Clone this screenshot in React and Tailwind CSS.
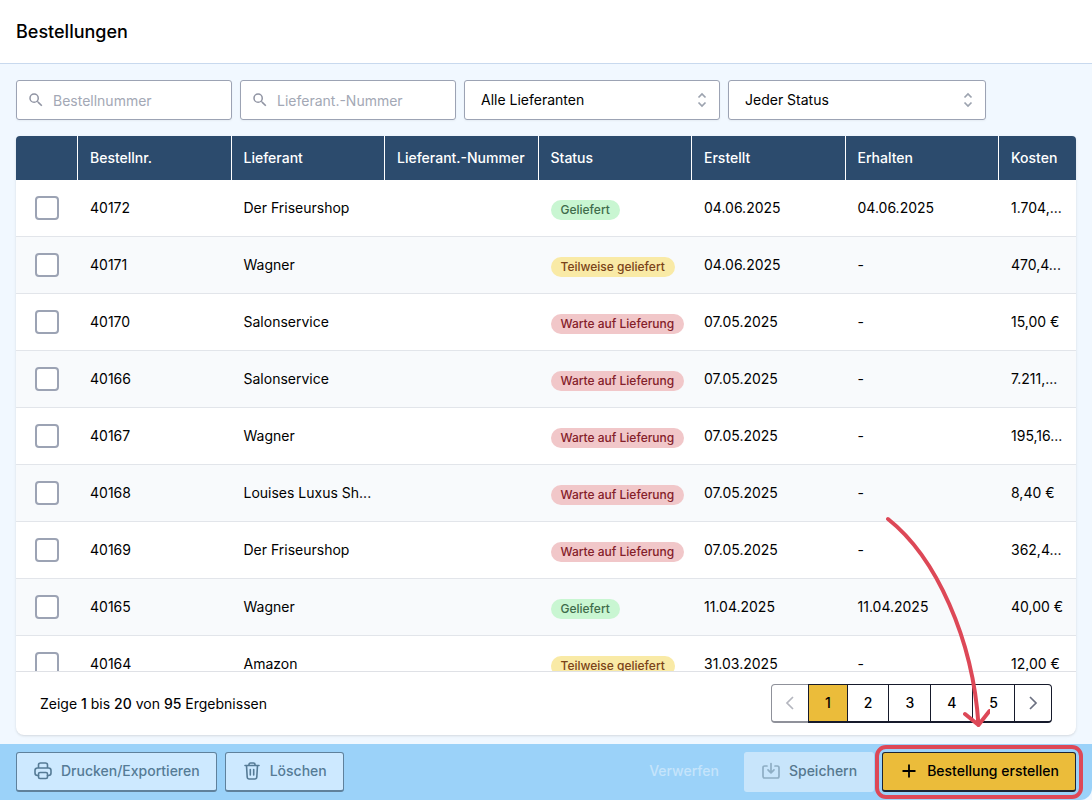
import React, { useState } from 'react';

const ORDERS = [
  { nr: '40172', supplier: 'Der Friseurshop', status: 'delivered', created: '04.06.2025', received: '04.06.2025', cost: '1.704,...' },
  { nr: '40171', supplier: 'Wagner', status: 'partial', created: '04.06.2025', received: '-', cost: '470,4...' },
  { nr: '40170', supplier: 'Salonservice', status: 'waiting', created: '07.05.2025', received: '-', cost: '15,00 €' },
  { nr: '40166', supplier: 'Salonservice', status: 'waiting', created: '07.05.2025', received: '-', cost: '7.211,...' },
  { nr: '40167', supplier: 'Wagner', status: 'waiting', created: '07.05.2025', received: '-', cost: '195,16...' },
  { nr: '40168', supplier: 'Louises Luxus Sh...', status: 'waiting', created: '07.05.2025', received: '-', cost: '8,40 €' },
  { nr: '40169', supplier: 'Der Friseurshop', status: 'waiting', created: '07.05.2025', received: '-', cost: '362,4...' },
  { nr: '40165', supplier: 'Wagner', status: 'delivered', created: '11.04.2025', received: '11.04.2025', cost: '40,00 €' },
  { nr: '40164', supplier: 'Amazon', status: 'partial', created: '31.03.2025', received: '-', cost: '12,00 €' },
];

const STATUS = {
  delivered: { label: 'Geliefert', className: 'bg-[#c9f6d2] text-[#3f6b4b]' },
  partial: { label: 'Teilweise geliefert', className: 'bg-[#f9eaa6] text-[#7a4318]' },
  waiting: { label: 'Warte auf Lieferung', className: 'bg-[#f1c7c9] text-[#842029]' },
};

const COLUMNS = ['Bestellnr.', 'Lieferant', 'Lieferant.-Nummer', 'Status', 'Erstellt', 'Erhalten', 'Kosten'];

const SearchField = ({ label }) => (
  <label className="flex h-10 w-[216px] items-center rounded-[3px] border border-[#9ca3b4] bg-white pl-2.5 shadow-xs">
    <svg viewBox="0 0 24 24" fill="currentColor" className="size-[18px] shrink-0 text-[#9094a3]">
      <path d="M15.5 14h-.79l-.28-.27A6.47 6.47 0 0 0 16 9.5 6.5 6.5 0 1 0 9.5 16c1.61 0 3.09-.59 4.23-1.57l.27.28v.79l5 4.99L20.49 19l-4.99-5zm-6 0a4.5 4.5 0 1 1 0-9 4.5 4.5 0 0 1 0 9z" />
    </svg>
    <input
      type="text"
      aria-label={label}
      placeholder={label}
      className="w-full min-w-0 bg-transparent px-2 pt-0.5 text-sm outline-none placeholder:text-[#a3a8b5]"
    />
  </label>
);

const SelectField = ({ label, options, className }) => (
  <div className={`relative ${className}`}>
    <select
      aria-label={label}
      className="h-10 w-full appearance-none rounded-[3px] border border-[#9ca3b4] bg-white pr-10 pl-4 text-sm shadow-xs outline-none"
    >
      {options.map((option) => (
        <option key={option}>{option}</option>
      ))}
    </select>
    <svg viewBox="0 0 20 20" fill="none" stroke="currentColor" strokeWidth="1.7" className="pointer-events-none absolute top-2.5 right-2 size-5 text-[#9ca3af]">
      <path d="M6.5 7.5 10 4l3.5 3.5M6.5 12.5 10 16l3.5-3.5" />
    </svg>
  </div>
);

const PrinterIcon = () => (
  <svg viewBox="0 0 20 20" fill="none" stroke="currentColor" strokeWidth="1.6" strokeLinejoin="round" strokeLinecap="round" className="size-5">
    <path d="M5.5 6.5V4c0-1.4.6-2 2-2h5c1.4 0 2 .6 2 2v2.500M5.500 14.500H4.500c-1.700 0-2.500-.8-2.500-2.500V9.500c0-1.700.8-2.500 2.500-2.500h11c1.700 0 2.500.8 2.500 2.500V12c0 1.700-.8 2.500-2.500 2.500h-1" />
    <rect x="5.5" y="11.5" width="9" height="6" rx="1.5" />
  </svg>
);

const TrashIcon = () => (
  <svg viewBox="0 0 20 20" fill="none" stroke="currentColor" strokeWidth="1.6" strokeLinejoin="round" strokeLinecap="round" className="size-5">
    <path d="M3 4.500h14M7 4.500V3.500C7 2.700 7.500 2 8.500 2h3c1 0 1.500.7 1.500 1.500v1M4.500 4.500l.7 11.500c.1 1.200.8 2 2 2h5.600c1.200 0 1.900-.8 2-2l.7-11.500M8.300 8.500v5.500M11.700 8.500v5.500" />
  </svg>
);

const SaveIcon = () => (
  <svg viewBox="0 0 20 20" fill="none" stroke="currentColor" strokeWidth="1.7" strokeLinejoin="round" strokeLinecap="round" className="size-5 opacity-50">
    <path d="M6 5H3.700C2.700 5 2 5.700 2 6.700v8.600c0 1 .7 1.700 1.700 1.700h12.600c1 0 1.700-.7 1.700-1.700V6.700c0-1-.7-1.700-1.700-1.700H14M10 2.500v9M7 8.800l3 3 3-3" />
  </svg>
);

const Pagination = ({ page, onChange }) => (
  <nav aria-label="Seiten" className="flex h-[39px] text-sm font-medium">
    <button
      type="button"
      aria-label="Zurück"
      disabled
      className="rounded-l-[4px] border border-b-2 border-[#8f919a] px-2 text-[#b4b6bf]"
    >
      <svg viewBox="0 0 20 20" fill="none" stroke="currentColor" strokeWidth="1.7" className="size-5">
        <path d="M13 4 7 10l6 6" />
      </svg>
    </button>
    {[1, 2, 3, 4, 5].map((n) => (
      <button
        key={n}
        type="button"
        onClick={() => onChange(n)}
        className={`-ml-px border border-b-2 border-[#161a2b] px-4 ${n === page ? 'bg-[#ebbc3a]' : 'bg-white'}`}
      >
        {n}
      </button>
    ))}
    <button
      type="button"
      aria-label="Weiter"
      className="-ml-px rounded-r-[4px] border border-b-2 border-[#161a2b] px-2 text-[#6b7080]"
    >
      <svg viewBox="0 0 20 20" fill="none" stroke="currentColor" strokeWidth="1.7" className="size-5">
        <path d="m7 4 6 6-6 6" />
      </svg>
    </button>
  </nav>
);

const App = () => {
  const [page, setPage] = useState(1);

  return (
    <div className="flex h-screen flex-col overflow-hidden bg-[#f1f8ff] font-['Inter',sans-serif] text-sm text-black">
      <header className="flex h-16 shrink-0 items-center border-b border-[#c8d9ee] bg-white px-4">
        <h1 className="text-lg font-medium">Bestellungen</h1>
      </header>

      <main className="flex min-h-0 flex-1 flex-col gap-4 px-4 pt-4 pb-[9px]">
        <div className="flex gap-2">
          <SearchField label="Bestellnummer" />
          <SearchField label="Lieferant.-Nummer" />
          <SelectField className="w-64" label="Lieferant" options={['Alle Lieferanten', 'Wagner', 'Salonservice', 'Amazon']} />
          <SelectField className="w-[258px]" label="Status" options={['Jeder Status', 'Geliefert', 'Teilweise geliefert', 'Warte auf Lieferung']} />
        </div>

        <section className="relative flex min-h-0 flex-1 flex-col rounded-t-[4px] rounded-b-lg bg-white shadow-sm">
          <div className="min-h-0 flex-1 overflow-y-auto rounded-t-[4px] [scrollbar-width:none]">
            <table className="w-full table-fixed border-separate border-spacing-0 text-left">
              <colgroup>
                <col className="w-[62px]" />
                <col span="6" />
                <col className="w-[77px]" />
              </colgroup>
              <thead>
                <tr className="h-11 bg-[#2c4b6d] text-white">
                  <th aria-label="Auswahl" className="border-r border-white" />
                  {COLUMNS.map((column) => (
                    <th key={column} className="border-r border-white px-3 font-medium whitespace-nowrap last:border-r-0">
                      {column}
                    </th>
                  ))}
                </tr>
              </thead>
              <tbody>
                {ORDERS.map((order) => (
                  <tr key={order.nr} className="h-[57px] even:bg-[#f8fafc] *:border-b *:border-[#e2e5ea]">
                    <td>
                      <input
                        type="checkbox"
                        aria-label={`Bestellung ${order.nr}`}
                        className="mx-auto block size-6 appearance-none rounded-[4px] border-2 border-[#9ca3b4] bg-white checked:bg-[#2c4b6d]"
                      />
                    </td>
                    <td className="px-3">{order.nr}</td>
                    <td className="truncate px-3">{order.supplier}</td>
                    <td />
                    <td className="px-3 pt-1">
                      <span className={`flex h-5 w-fit items-center rounded-full px-2.5 text-xs font-medium whitespace-nowrap ${STATUS[order.status].className}`}>
                        {STATUS[order.status].label}
                      </span>
                    </td>
                    <td className="px-3">{order.created}</td>
                    <td className="px-3">{order.received}</td>
                    <td className="pl-3 whitespace-nowrap">{order.cost}</td>
                  </tr>
                ))}
              </tbody>
            </table>
          </div>

          <div className="flex h-16 shrink-0 items-center justify-between border-t border-[#dfe1e6] px-6">
            <p>
              Zeige <span className="font-medium">1</span> bis <span className="font-medium">20</span> von{' '}
              <span className="font-medium">95</span> Ergebnissen
            </p>
            <Pagination page={page} onChange={setPage} />
          </div>

          {/* arrow pointing at the create button */}
          <svg viewBox="0 0 110 220" fill="none" stroke="#dd4857" strokeWidth="4" strokeLinecap="round" strokeLinejoin="round" className="pointer-events-none absolute right-[86px] bottom-[3px] h-[220px] w-[110px]">
            <path d="M8 7C56 45 93 127 98.500 213M85 202l13.500 11 11-14" className="overflow-visible" />
          </svg>
        </section>
      </main>

      <footer className="flex h-14 shrink-0 items-center gap-2 rounded-br-xl bg-[#9bd2f9] px-4 font-medium">
        <button type="button" className="flex h-10 items-center gap-2 rounded-[3px] border border-b-2 border-[#5f819c] bg-[#cde9ff] px-4 pb-px text-[#557b96]">
          <PrinterIcon />
          Drucken/Exportieren
        </button>
        <button type="button" className="flex h-10 items-center gap-2 rounded-[3px] border border-b-2 border-[#5f819c] bg-[#cde9ff] px-4 pb-px text-[#557b96]">
          <TrashIcon />
          Löschen
        </button>
        <button type="button" disabled className="ml-auto h-10 border border-b-2 border-transparent px-4 pb-px text-[#c5e4fb]">
          Verwerfen
        </button>
        <button type="button" disabled className="flex h-10 items-center gap-2 rounded-[3px] border border-b-2 border-[#c8e5fb] bg-[#c8e5fb] px-4 pb-px text-[#56788f]">
          <SaveIcon />
          Speichern
        </button>
        <div className="relative">
          <button type="button" className="flex h-10 items-center gap-2 rounded-[3px] border border-b-2 border-[#1c2333] bg-[#ebbc3a] px-4 pb-px">
            <svg viewBox="0 0 20 20" fill="none" stroke="currentColor" strokeWidth="1.8" className="size-5">
              <path d="M10 3.500v13M3.500 10h13" />
            </svg>
            Bestellung erstellen
          </button>
          <div className="pointer-events-none absolute -inset-[7px] rounded-[11px] border-4 border-[#dd4857]" />
        </div>
      </footer>
    </div>
  );
};

export default App;
